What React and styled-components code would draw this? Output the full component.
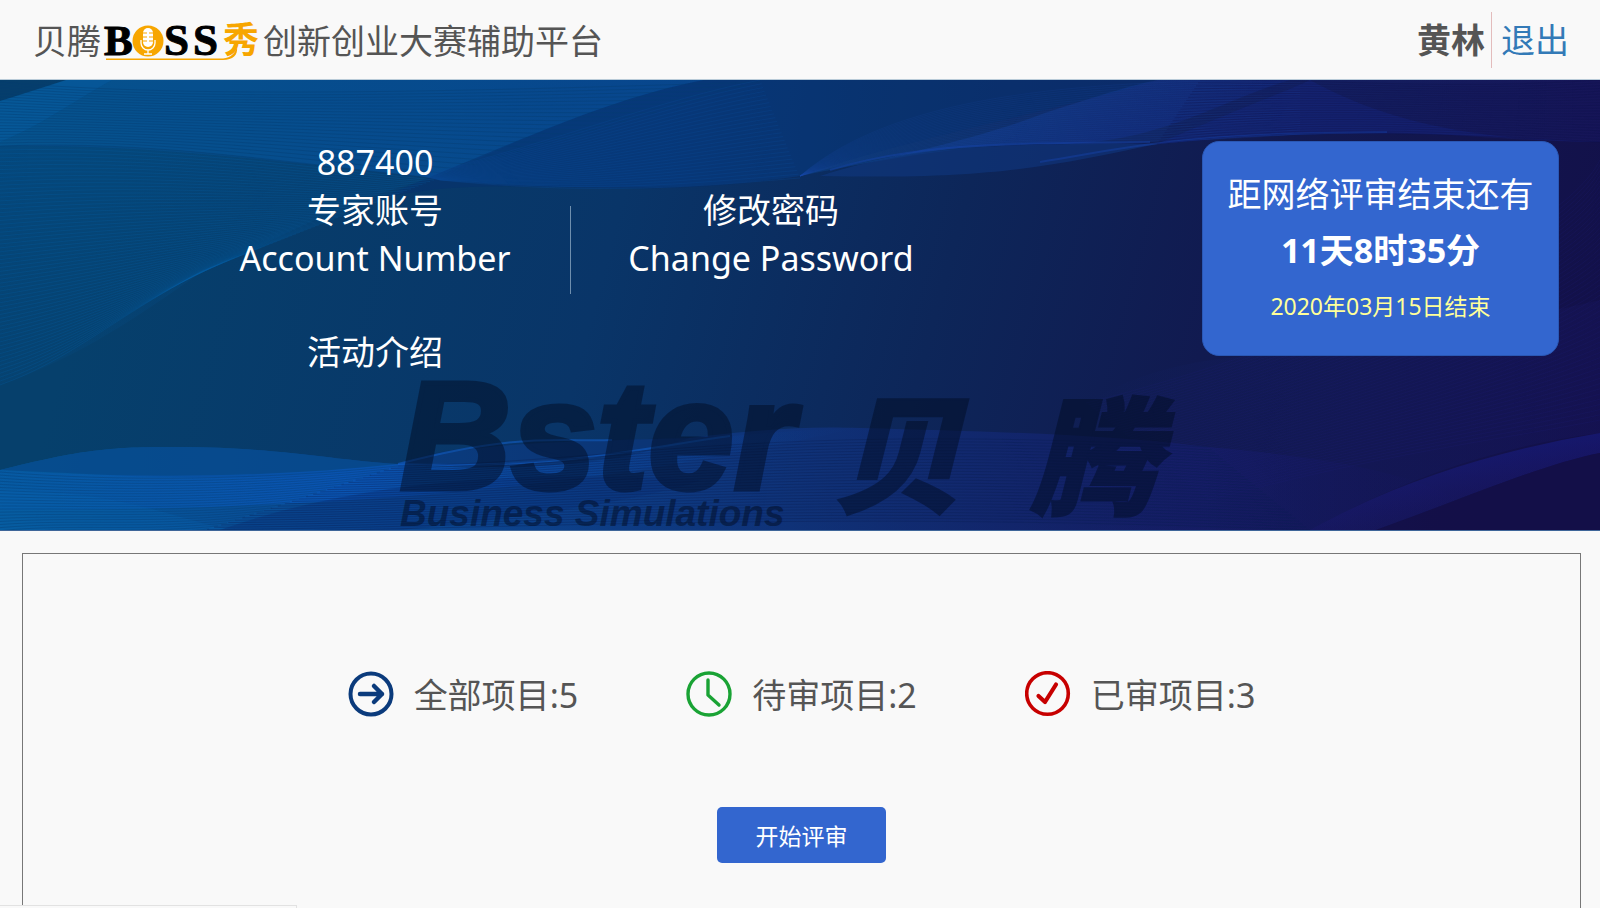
import React from 'react';
import styled, { createGlobalStyle } from 'styled-components';

const GlobalStyle = createGlobalStyle`
  * {
    box-sizing: border-box;
  }
  body {
    margin: 0;
    background-color: #f9f9f9;
    color: #555;
    font-family: 'Noto Sans', 'Noto Sans CJK SC', sans-serif;
    font-size: 34px;
    line-height: 48px;
  }
  a {
    text-decoration: none;
  }
`;

const Page = styled.div`
  display: flex;
  flex-direction: column;
  min-height: 100vh;
`;

const Header = styled.header`
  display: flex;
  justify-content: space-between;
  align-items: center;
  height: 80px;
  padding: 0 31px 0 33px;
  border-bottom: 1px solid #b9cbd8;
`;

const Title = styled.h1`
  display: flex;
  align-items: center;
  margin: 0;
  padding-top: 3px;
  font-size: 34px;
  font-weight: 400;
`;

const LogoSvg = styled.svg`
  width: 158px;
  height: 48px;
  margin-left: 4px;
  overflow: visible;
`;

const UserBar = styled.div`
  display: flex;
  align-items: center;
`;

const UserName = styled.strong`
  padding-right: 6px;
`;

const Logout = styled.a`
  padding-left: 9px;
  border-left: 1px solid #e3bcbc;
  line-height: 56px;
  color: #337ab7;
`;

const Banner = styled.section`
  position: relative;
  display: flex;
  justify-content: space-between;
  align-items: flex-start;
  height: 451px;
  padding: 58px 41px 0 180px;
  border-bottom: 1px solid #3f6699;
  background: linear-gradient(105deg, #06406c 8%, #093568 38%, #0d2659 58%, #111a50 74%, #130f49 100%);
  color: white;
`;

const Waves = styled.svg`
  position: absolute;
  inset: 0;
  width: 100%;
  height: 100%;
`;

const Watermark = styled.svg`
  position: absolute;
  bottom: 0;
  left: 50%;
  width: 820px;
  height: 160px;
  transform: translateX(-50%);
  overflow: visible;
`;

const Menu = styled.nav`
  position: relative;
  display: grid;
  grid-template-columns: 390px 1px 400px;
  align-items: end;
  row-gap: 46px;
  text-align: center;
`;

const MenuText = styled.div`
  display: flex;
  flex-direction: column;
`;

const MenuLink = styled.a`
  display: flex;
  flex-direction: column;
  color: white;
`;

const Divider = styled.span`
  height: 88px;
  margin-bottom: -12px;
  background-color: #6f8fae;
`;

const Countdown = styled.aside`
  position: relative;
  display: flex;
  flex-direction: column;
  align-items: center;
  gap: 8px;
  width: 357px;
  height: 215px;
  margin-top: 3px;
  padding-top: 28px;
  border: 1px solid #2a58b5;
  border-radius: 17px;
  background-color: #3366cf;
`;

const EndDate = styled.span`
  font-size: 23px;
  color: #ffff99;
`;

const Review = styled.main`
  display: flex;
  flex: 1;
  flex-direction: column;
  align-items: center;
  margin: 22px 19px 0 22px;
  padding-top: 117px;
  border: 1px solid #777;
  border-bottom: none;
`;

const Stats = styled.ul`
  display: flex;
  justify-content: center;
  gap: 108px;
  margin: 0 0 88px;
  padding: 0;
  list-style: none;
`;

const Stat = styled.li`
  display: flex;
  align-items: center;
  gap: 20px;
  svg {
    width: 46px;
    height: 46px;
    margin-bottom: 2px;
  }
`;

const StartButton = styled.button`
  width: 169px;
  height: 56px;
  border: none;
  border-radius: 5px;
  background-color: #3366cf;
  color: white;
  font-family: inherit;
  font-size: 23px;
  cursor: pointer;
`;

const StatusBubble = styled.div`
  position: fixed;
  bottom: 0;
  left: 0;
  width: 297px;
  height: 3px;
  border: 1px solid #e2e2e2;
  border-width: 1px 1px 0 0;
  background-color: #f9f9f9;
`;

// Draws a sheet of fine lines between two cubic curves [x0,y0,...,x3,y3]
function Mesh({ from, to, count, color, opacity }) {
  const lines = [];
  for (let i = 0; i <= count; i++) {
    const p = from.map((v, k) => v + ((to[k] - v) * i) / count);
    lines.push(`M${p[0]} ${p[1]}C${p[2]} ${p[3]} ${p[4]} ${p[5]} ${p[6]} ${p[7]}`);
  }
  return <path d={lines.join('')} fill="none" stroke={color} strokeOpacity={opacity} />;
}

function BannerWaves() {
  return (
    <Waves viewBox="0 0 1600 450" preserveAspectRatio="none" aria-hidden="true">
      <defs>
        <linearGradient id="top" x1="0" x2="1">
          <stop offset="0" stopColor="#04558c" stopOpacity="0.75" />
          <stop offset="0.42" stopColor="#074590" stopOpacity="0.7" />
          <stop offset="0.55" stopColor="#0c3c7c" stopOpacity="0.6" />
          <stop offset="0.8" stopColor="#14246c" stopOpacity="0.6" />
          <stop offset="1" stopColor="#181864" stopOpacity="0.5" />
        </linearGradient>
        <linearGradient id="side" x1="0" y1="0" x2="0.7" y2="1">
          <stop offset="0" stopColor="#034f8c" stopOpacity="0.55" />
          <stop offset="1" stopColor="#06497f" stopOpacity="0.05" />
        </linearGradient>
        <linearGradient id="fold" x1="0" x2="1" y1="0" y2="0.4">
          <stop offset="0" stopColor="#1258ba" stopOpacity="0" />
          <stop offset="0.4" stopColor="#154aa4" stopOpacity="0.4" />
          <stop offset="1" stopColor="#142690" stopOpacity="0.3" />
        </linearGradient>
        <linearGradient id="bottom" x1="0" x2="1">
          <stop offset="0" stopColor="#0560a6" stopOpacity="0.8" />
          <stop offset="0.25" stopColor="#0b50a6" stopOpacity="0.7" />
          <stop offset="0.55" stopColor="#12368a" stopOpacity="0.55" />
          <stop offset="0.8" stopColor="#181f7c" stopOpacity="0.4" />
          <stop offset="1" stopColor="#150f5a" stopOpacity="0" />
        </linearGradient>
        <linearGradient id="glow" x1="0" x2="1">
          <stop offset="0" stopColor="#0a5cc0" stopOpacity="0.2" />
          <stop offset="0.4" stopColor="#0a5ccc" stopOpacity="0.5" />
          <stop offset="1" stopColor="#0a46a0" stopOpacity="0" />
        </linearGradient>
        <linearGradient id="corner" x1="0" y1="0" x2="0.4" y2="1">
          <stop offset="0" stopColor="#1423a0" stopOpacity="0.6" />
          <stop offset="1" stopColor="#241c86" stopOpacity="0.15" />
        </linearGradient>
        <linearGradient id="east" x1="0" x2="1">
          <stop offset="0" stopColor="#142878" stopOpacity="0" />
          <stop offset="1" stopColor="#161458" stopOpacity="0.5" />
        </linearGradient>
      </defs>

      <path d="M0 66C150 60 280 82 434 98C550 112 700 110 800 96C900 76 970 64 1055 64C1130 66 1200 57 1290 54C1400 46 1500 62 1600 62V0H0Z" fill="url(#top)" />
      <path d="M0 66C150 60 280 82 434 98C340 120 270 165 204 190C120 250 70 280 0 305Z" fill="url(#side)" />
      <path d="M0 62C40 46 75 20 112 0H704C600 20 500 70 434 98C280 82 150 64 0 66Z" fill="#0860b4" fillOpacity="0.2" />
      <path d="M0 21L66 0H0Z" fill="#063a66" fillOpacity="0.8" />
      <path d="M0 21C30 12 50 5 66 0H112C75 20 40 46 0 62Z" fill="#0a6fd0" fillOpacity="0.25" />
      <path d="M704 0C600 20 500 70 367 123C440 100 520 107 600 108C700 110 760 102 800 96C900 60 1060 30 1157 0Z" fill="#06306e" fillOpacity="0.5" />
      <path d="M800 96C900 76 980 58 1045 33C1110 12 1130 6 1157 0H1290C1220 20 1160 64 1055 64C960 62 900 76 800 96Z" fill="url(#fold)" />
      <path d="M820 96C900 70 980 62 1157 64C1060 84 1000 100 820 96Z" fill="#103a86" fillOpacity="0.5" />
      <path d="M1157 64C1260 20 1290 10 1310 0C1400 50 1500 60 1600 62C1470 56 1350 46 1157 64Z" fill="#182a92" fillOpacity="0.3" />
      <path d="M830 90C930 60 1030 64 1150 62M1040 82C1120 70 1160 54 1387 52" fill="none" stroke="#1645b4" strokeOpacity="0.4" strokeWidth="2" />

      <path d="M1086 323C1140 290 1200 280 1239 277C1360 262 1450 256 1600 220V353C1500 365 1400 400 1310 450H1086Z" fill="url(#east)" />
      <path d="M0 390C80 370 110 367 168 367C270 366 330 380 398 384C470 362 560 362 689 358C760 350 800 346 860 348C1000 352 1100 354 1208 367C1360 380 1450 400 1500 450H0Z" fill="url(#bottom)" />
      <path d="M0 390C80 370 110 367 168 367C270 366 330 380 398 384C320 398 250 397 189 397C120 397 60 392 0 390Z" fill="#07488a" fillOpacity="0.75" />
      <path d="M0 390C100 397 250 400 398 384C460 390 560 390 612 375C700 358 750 352 860 348C700 380 500 430 0 430Z" fill="url(#glow)" />
      <path d="M398 384C460 362 520 362 689 358C660 368 610 388 480 387Z" fill="#0a2f6a" fillOpacity="0.5" />
      <path d="M398 384C520 352 560 362 612 360M398 384C560 390 640 368 730 356" fill="none" stroke="#1260cc" strokeOpacity="0.55" strokeWidth="2" />
      <path d="M0 410C120 410 180 440 230 450H0Z" fill="#0a62b0" fillOpacity="0.3" />
      <path d="M220 450C360 400 520 390 700 400C650 420 500 440 400 450Z" fill="#082f76" fillOpacity="0.35" />
      <path d="M1600 353C1500 370 1400 400 1310 450H1376C1460 420 1540 385 1600 373Z" fill="url(#corner)" />
      <path d="M1600 373C1540 385 1460 420 1376 450H1600Z" fill="#140f48" fillOpacity="0.85" />

      <Mesh from={[0, 2, 200, 20, 500, 10, 760, 2]} to={[0, 66, 150, 60, 280, 82, 434, 98]} count={22} color="#053c70" opacity="0.4" />
      <Mesh from={[0, 70, 150, 66, 280, 84, 434, 100]} to={[0, 305, 70, 280, 110, 240, 204, 190]} count={60} color="#0561a8" opacity="0.25" />
      <Mesh from={[420, 96, 560, 60, 660, 20, 760, 0]} to={[440, 100, 600, 116, 700, 106, 800, 98]} count={26} color="#0a4a96" opacity="0.3" />
      <Mesh from={[800, 96, 900, 10, 1100, 0, 1300, 0]} to={[800, 96, 960, 50, 1100, 70, 1300, 54]} count={26} color="#1c4aa8" opacity="0.15" />
      <Mesh from={[1200, 0, 1350, 0, 1450, 10, 1600, 0]} to={[1157, 64, 1300, 46, 1450, 54, 1600, 62]} count={22} color="#0e1048" opacity="0.3" />
      <Mesh from={[1600, 80, 1560, 160, 1300, 270, 1086, 323]} to={[1600, 340, 1500, 360, 1400, 370, 1208, 420]} count={50} color="#1c1c78" opacity="0.2" />
      <Mesh from={[0, 392, 120, 402, 260, 400, 398, 386]} to={[0, 460, 60, 450, 120, 460, 200, 452]} count={22} color="#06386e" opacity="0.35" />
      <Mesh from={[398, 386, 620, 382, 760, 342, 1208, 367]} to={[200, 452, 500, 450, 800, 430, 1310, 450]} count={28} color="#081c50" opacity="0.35" />
    </Waves>
  );
}

function BsterWatermark() {
  return (
    <Watermark viewBox="0 0 820 160" aria-hidden="true">
      <g opacity="0.5" fill="#020d24" fontFamily="'Liberation Sans', 'Noto Sans CJK SC', sans-serif" fontStyle="italic">
        <text x="10" y="119" fontSize="154" fontWeight="700" stroke="#020d24" strokeWidth="5">Bster</text>
        <text x="10" y="156" fontSize="37" fontWeight="700">Business Simulations</text>
        <g fontSize="128" fontWeight="900" stroke="#020d24" strokeWidth="2">
          <text x="443" y="133">贝</text>
          <text x="640" y="135">腾</text>
        </g>
      </g>
    </Watermark>
  );
}

function BossLogo() {
  return (
    <LogoSvg viewBox="0 0 158 48" role="img" aria-label="BOSS秀">
      <g fontFamily="'Liberation Serif', serif" fontSize="45" fontWeight="700" fill="#000" stroke="#000">
        <text x="-1" y="38" fontSize="43">B</text>
        <text x="59" y="38">S</text>
        <text x="88" y="38">S</text>
      </g>
      <circle cx="43" cy="24" r="15.500" fill="#f7a600" />
      <rect x="38" y="11" width="10" height="19" rx="5" fill="#fff" />
      <path d="M38 16h4M38 20h4M38 24h4M44 16h4M44 20h4M44 24h4" stroke="#f7a600" />
      <path d="M36 23v3a7 7 0 0 0 14 0v-3M43 33v4M39 37h8" fill="none" stroke="#fff" strokeWidth="1.3" />
      <path d="M1 41.500H118C126 41 130 36 132 30C133 38 128 43 118 43H1Z" fill="#f7a600" />
      <text x="118" y="36" fontFamily="'Noto Sans CJK SC', sans-serif" fontSize="36" fontWeight="700" fill="#f7a600">秀</text>
    </LogoSvg>
  );
}

const stats = [
  {
    label: '全部项目',
    value: 5,
    icon: (
      <svg viewBox="0 0 46 46" fill="none" stroke="#0b3b7c" strokeWidth="4" strokeLinecap="round" strokeLinejoin="round">
        <circle cx="23" cy="23" r="20.500" />
        <path d="M12 23h22M26 15l8 8-8 8" strokeWidth="4.500" />
      </svg>
    ),
  },
  {
    label: '待审项目',
    value: 2,
    icon: (
      <svg viewBox="0 0 46 46" fill="none" stroke="#1aa335" strokeLinecap="round" strokeLinejoin="round">
        <circle cx="23" cy="23" r="21" strokeWidth="3.400" />
        <path d="M22 9v15l11 10" strokeWidth="3.400" />
      </svg>
    ),
  },
  {
    label: '已审项目',
    value: 3,
    icon: (
      <svg viewBox="0 0 46 46" fill="none" stroke="#c70000" strokeLinecap="round" strokeLinejoin="round">
        <circle cx="22.500" cy="22.500" r="20.800" strokeWidth="3.600" />
        <path d="M13.500 25l6.500 6L31 13.500" strokeWidth="4.200" />
      </svg>
    ),
  },
];

export default function App() {
  return (
    <Page>
      <GlobalStyle />
      <Header>
        <Title>
          贝腾
          <BossLogo />
          创新创业大赛辅助平台
        </Title>
        <UserBar>
          <UserName>黄林</UserName>
          <Logout href="#logout">退出</Logout>
        </UserBar>
      </Header>
      <Banner>
        <BannerWaves />
        <BsterWatermark />
        <Menu>
          <MenuText>
            <span>887400</span>
            <span>专家账号</span>
            <span>Account Number</span>
          </MenuText>
          <Divider />
          <MenuLink href="#password">
            <span>修改密码</span>
            <span>Change Password</span>
          </MenuLink>
          <MenuLink href="#about">活动介绍</MenuLink>
        </Menu>
        <Countdown>
          <span>距网络评审结束还有</span>
          <strong>11天8时35分</strong>
          <EndDate>2020年03月15日结束</EndDate>
        </Countdown>
      </Banner>
      <Review>
        <Stats>
          {stats.map((stat) => (
            <Stat key={stat.label}>
              {stat.icon}
              <span>
                {stat.label}:{stat.value}
              </span>
            </Stat>
          ))}
        </Stats>
        <StartButton type="button">开始评审</StartButton>
      </Review>
      <StatusBubble />
    </Page>
  );
}
